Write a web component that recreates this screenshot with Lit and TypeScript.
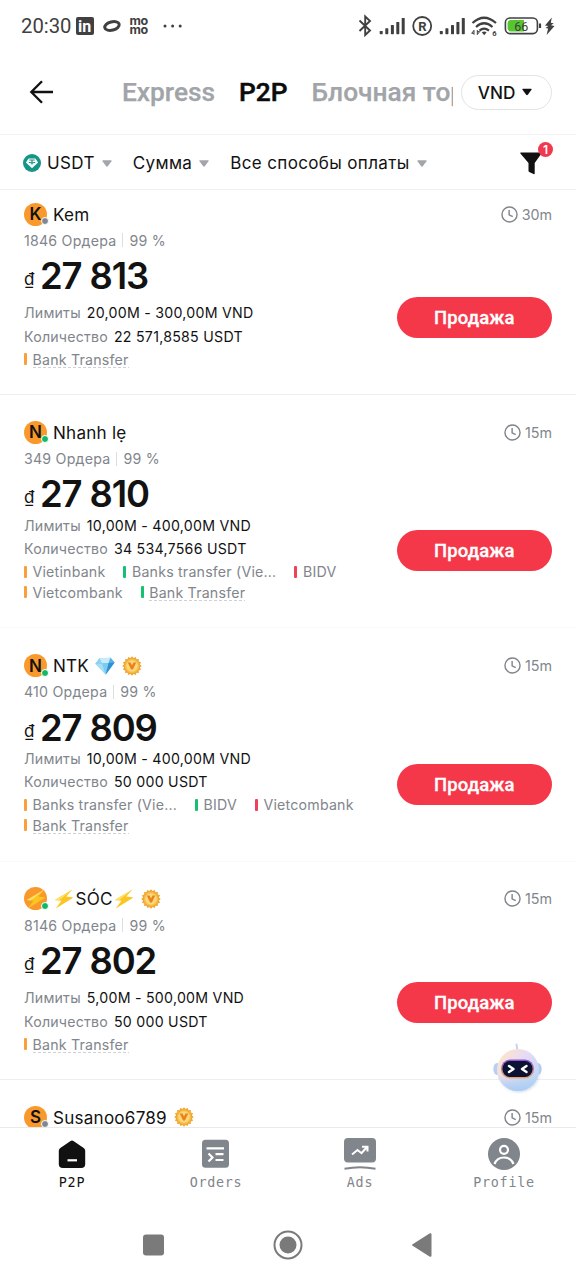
import { LitElement, html, svg, css, nothing } from 'lit';
import { customElement, property } from 'lit/decorators.js';
import { classMap } from 'lit/directives/class-map.js';

type Tone = 'orange' | 'green' | 'red';
interface Payment { name: string; tone: Tone; dashed?: boolean }
interface Offer {
  name: string;
  letter?: string;
  online: boolean;
  diamond?: boolean;
  bolts?: boolean;
  verified?: boolean;
  orders?: string;
  price?: string;
  limits?: string;
  amount?: string;
  time: string;
  rows: Payment[][];
}

const bank: Payment = { name: 'Bank Transfer', tone: 'orange', dashed: true };

const offers: Offer[] = [
  { name: 'Kem', letter: 'K', online: false, orders: '1846', price: '27 813', limits: '20,00M - 300,00M VND', amount: '22 571,8585 USDT', time: '30m', rows: [[bank]] },
  {
    name: 'Nhanh lẹ', letter: 'N', online: true, orders: '349', price: '27 810', limits: '10,00M - 400,00M VND', amount: '34 534,7566 USDT', time: '15m',
    rows: [
      [{ name: 'Vietinbank', tone: 'orange' }, { name: 'Banks transfer (Vie...', tone: 'green' }, { name: 'BIDV', tone: 'red' }],
      [{ name: 'Vietcombank', tone: 'orange' }, { ...bank, tone: 'green' }],
    ],
  },
  {
    name: 'NTK', letter: 'N', online: true, diamond: true, verified: true, orders: '410', price: '27 809', limits: '10,00M - 400,00M VND', amount: '50 000 USDT', time: '15m',
    rows: [
      [{ name: 'Banks transfer (Vie...', tone: 'orange' }, { name: 'BIDV', tone: 'green' }, { name: 'Vietcombank', tone: 'red' }],
      [bank],
    ],
  },
  { name: 'SÓC', online: true, bolts: true, verified: true, orders: '8146', price: '27 802', limits: '5,00M - 500,00M VND', amount: '50 000 USDT', time: '15m', rows: [[bank]] },
  { name: 'Susanoo6789', letter: 'S', online: false, verified: true, time: '15m', rows: [] },
];

const boltIcon = html`<svg class="ico" width="20" height="20" viewBox="0 0 20 20">
  <path d="M18.500.500.800 11l6.600.700L1.800 19.500 19.500 8.600l-7.300-1z" fill="#fcc521"/>
  <path d="M18.500.500.800 11l4 .400z" fill="#ffe06a"/>
</svg>`;

const diamondIcon = html`<svg class="ico" width="20" height="18" viewBox="0 0 20 18">
  <path d="M4.5 1.2 15.5.8 19.6 5.6 10.8 17.4.4 6.8z" fill="#5fb9ea"/>
  <path d="M4.5 1.2 7 6.4.4 6.8z" fill="#8fd2f3"/>
  <path d="M4.5 1.2 15.5.8 13.6 6.1 7 6.4z" fill="#c9ecfb"/>
  <path d="M15.5.8 19.6 5.6l-6 .5z" fill="#59b2e6"/>
  <path d="M7 6.4 13.6 6.1 10.8 17.4z" fill="#7ccbf2"/>
  <path d="M.4 6.8 7 6.4l3.8 11z" fill="#a6def7"/>
  <path d="M19.6 5.6l-6 .5-2.8 11.3z" fill="#2f8fd0"/>
</svg>`;

const spikes = Array.from({ length: 16 }, (_, i) => {
  const at = (r: number, k: number) => {
    const a = (Math.PI * 2 * k) / 32;
    return `${(10 + r * Math.sin(a)).toFixed(2)},${(10 - r * Math.cos(a)).toFixed(2)}`;
  };
  return `${at(9.8, i * 2)} ${at(8.1, i * 2 + 1)}`;
}).join(' ');

const badgeIcon = html`<svg class="ico" width="20" height="20" viewBox="0 0 20 20">
  <polygon points=${spikes} fill="#efa733"/>
  <circle cx="10" cy="10" r="7.2" fill="#f6bd4a"/>
  <circle cx="10" cy="10" r="5.8" fill="#fdd77a"/>
  <path d="M5.8 6.4h2.7L10 9.4l1.5-3h2.7L10.9 13.6H9.1z" fill="#e8821c"/>
</svg>`;

const clockIcon = html`<svg class="ico" width="17" height="17" viewBox="0 0 18 18" fill="none" stroke="#81858c" stroke-width="1.5">
  <circle cx="9" cy="9" r="8"/><path d="M8.6 4.2v5.200l3.800 1.900"/>
</svg>`;

const caret = (fill: string, w = 10, h = 7) => html`<svg class="ico" width=${w} height=${h} viewBox="0 0 10 7">
  <path d="M1 .3h8q1 .1.5 1L5.8 6.3q-.8.8-1.6 0L.5 1.3Q0 .4 1 .3z" fill=${fill}/>
</svg>`;

const signalBars = svg`<g fill="#404040" stroke="none">
  <rect x="0" y="13" width="3" height="3.2" rx=".6"/><rect x="5.6" y="10.2" width="3" height="6" rx=".6"/>
  <rect x="11.2" y="7" width="3" height="9.2" rx=".6"/><rect x="16.6" y="4" width="3" height="12.2" rx=".6"/>
  <rect x="22" y="0" width="3" height="16.2" rx=".6"/>
</g>`;

@customElement('offer-card')
class OfferCard extends LitElement {
  @property({ attribute: false }) offer!: Offer;

  static styles = css`
    :host { display: block; font-family: Inter, sans-serif; color: #121212; }
    .card { display: flex; justify-content: space-between; height: 218.3px; padding: 24.4px 24px 0; box-sizing: border-box; border-bottom: 1px solid #eeeeef; }
    .card.double { height: 233.3px; border-bottom-color: #fafafa; }
    .info { display: flex; flex-direction: column; align-items: flex-start; }
    .ico { display: block; flex: none; }
    .name { display: flex; align-items: center; height: 26px; font-size: 17.1px; letter-spacing: .22px; white-space: nowrap; }
    .text { margin-left: 6px; }
    .badge { margin-left: 7px; }
    .diamond { margin-left: 6px; }
    .bolted { display: flex; align-items: center; gap: 1.5px; margin-left: 7px; }
    .avatar { position: relative; display: flex; width: 23px; height: 23px; border-radius: 50%; background: #f9992b; align-items: center; justify-content: center; font-size: 17px; font-weight: 600; letter-spacing: 0; flex: none; }
    .dot { position: absolute; right: -1.5px; bottom: .5px; width: 6px; height: 6px; border: 1px solid #fff; border-radius: 50%; background: #7f8694; }
    .dot.on { background: #0fb866; }
    .orders { display: flex; align-items: center; height: 20px; margin-top: 3.4px; font-size: 14.2px; letter-spacing: .22px; color: #81858c; white-space: nowrap; }
    .sep { width: 1px; height: 14px; margin: 0 6px; background: #dcdde0; }
    .price { display: flex; align-items: flex-start; height: 44px; line-height: 44px; margin-top: 3.6px; white-space: nowrap; }
    .cur { width: 16px; font-size: 17px; line-height: 51px; }
    .num { font-size: 36.4px; font-weight: 600; letter-spacing: -1.1px; }
    .lines { display: flex; flex-direction: column; align-items: flex-start; margin-top: 3px; }
    .double .lines { margin-top: -3px; }
    .line { display: flex; height: 23.5px; align-items: center; gap: 6px; font-size: 14.2px; color: #81858c; white-space: nowrap; letter-spacing: .2px; }
    .line b { font-weight: 400; color: #121212; letter-spacing: .25px; }
    .pays { display: flex; gap: 18px; height: 20.5px; align-items: center; margin-top: 1px; white-space: nowrap; }
    .pays + .pays { margin-top: 0; }
    .pay { display: flex; align-items: center; gap: 5.5px; font-size: 14.2px; letter-spacing: .2px; line-height: 17px; color: #81858c; }
    .pay i { width: 3px; height: 12px; border-radius: 1px; }
    .orange i { background: #f9a03a; } .green i { background: #17bf70; } .red i { background: #f0405a; }
    .dashed span { background: repeating-linear-gradient(90deg, #cfd1d4 0 3px, transparent 3px 5px) left bottom / 100% 1px no-repeat; }
    .side { display: flex; flex-direction: column; justify-content: space-between; align-items: flex-end; padding-bottom: 55.5px; }
    .double .side { padding-bottom: 56px; }
    .time { display: flex; align-items: center; height: 26px; gap: 3.5px; font-size: 14.3px; letter-spacing: 0; color: #81858c; }
    .sell { display: block; width: 155.5px; height: 41px; padding: 0; border: 0; border-radius: 21px; background: #f53849; color: #fff; font: 500 18.5px/42px Roboto, sans-serif; text-align: center; letter-spacing: .1px; -webkit-text-stroke: .3px #fff; }
  `;

  render() {
    const o = this.offer;
    return html`<article class=${classMap({ card: true, double: o.rows.length > 1 })}>
      <div class="info">
        <div class="name">
          <span class="avatar">${o.letter ?? boltIcon}<span class=${classMap({ dot: true, on: o.online })}></span></span>
          ${o.bolts
            ? html`<span class="bolted">${boltIcon}<span>${o.name}</span>${boltIcon}</span>`
            : html`<span class="text">${o.name}</span>`}
          ${o.diamond ? html`<span class="diamond">${diamondIcon}</span>` : nothing}
          ${o.verified ? html`<span class="badge">${badgeIcon}</span>` : nothing}
        </div>
        ${o.price
          ? html`<div class="orders"><span>${o.orders} Ордера</span><span class="sep"></span><span>99 %</span></div>
            <div class="price"><span class="cur">₫</span><span class="num">${o.price}</span></div>
            <div class="lines">
              <div class="line"><span>Лимиты</span><b>${o.limits}</b></div>
              <div class="line"><span>Количество</span><b>${o.amount}</b></div>
              ${o.rows.map((row) => html`<div class="pays">${row.map((p) => html`<div class=${classMap({ pay: true, [p.tone]: true, dashed: !!p.dashed })}><i></i><span>${p.name}</span></div>`)}</div>`)}
            </div>`
          : nothing}
      </div>
      <div class="side">
        <div class="time">${clockIcon}<span>${o.time}</span></div>
        ${o.price ? html`<button class="sell">Продажа</button>` : nothing}
      </div>
    </article>`;
  }
}

@customElement('app-root')
class AppRoot extends LitElement {
  static styles = css`
    :host { display: flex; flex-direction: column; position: relative; width: 576px; height: 1280px; overflow: hidden; background: #fff; font-family: Inter, sans-serif; color: #121212; }
    .ico { display: block; flex: none; }
    .status { display: flex; align-items: center; height: 52px; padding: 0 21px; box-sizing: border-box; flex: none; font-family: Roboto, sans-serif; color: #404040; }
    .clock { font-size: 20.3px; margin-right: 4px; line-height: 52px; }
    .linkedin { width: 18px; height: 18px; border-radius: 2px; background: #404040; color: #fff; font: 700 16px/19px Roboto, sans-serif; text-align: center; }
    .ring { margin-left: 8px; }
    .momo { display: flex; flex-direction: column; margin-left: 8px; width: 19px; font: 700 12.5px/9px Inter, sans-serif; letter-spacing: -.5px; padding-bottom: 2px; }
    .dots { margin-left: 14px; }
    .grow { flex: 1; }
    .header { display: flex; align-items: center; height: 83px; padding: 0 24px 1.5px 28px; box-sizing: border-box; flex: none; border-bottom: 1.5px solid #f2f2f2; }
    .tabs { display: flex; width: 331px; margin-left: 68px; gap: 24px; overflow: hidden; white-space: nowrap; font: 500 26.3px/36px Roboto, sans-serif; color: #a1a4a8; }
    .tab { -webkit-text-stroke: .25px currentColor; }
    .tab.active { color: #0b0b0b; -webkit-text-stroke-width: .5px; }
    .vnd { display: flex; width: 91px; height: 35px; margin-left: auto; box-sizing: border-box; border: 1.3px solid #e2e3e4; border-radius: 18px; align-items: center; justify-content: center; gap: 7px; padding-right: 3px; font-size: 17.2px; font-weight: 500; flex: none; }
    .filters { display: flex; align-items: center; height: 55px; padding: 2px 24px 0 23px; box-sizing: border-box; border-bottom: 1.5px solid #f0f0f1; flex: none; font-size: 17px; letter-spacing: .36px; white-space: nowrap; }
    .filter { display: flex; align-items: center; gap: 7px; margin-right: 21px; }
    .usdt { margin-right: 6px; }
    .funnel { position: relative; margin-left: auto; margin-right: 10px; }
    .count { position: absolute; left: 18px; top: -10px; width: 15px; height: 15px; border-radius: 50%; background: #f0394f; color: #fff; font: 600 12px/15px Inter, sans-serif; text-align: center; letter-spacing: 0; }
    .list { flex: 1; min-height: 0; overflow: hidden; }
    .scroll { margin-top: -13.4px; }
    .nav { display: grid; grid-template-columns: repeat(4, 1fr); height: 82px; flex: none; border-top: 1.3px solid #e9eaeb; background: #fff; }
    .item { display: flex; flex-direction: column; align-items: center; padding-top: 10px; font: 13.4px/16px "DejaVu Sans Mono", monospace; letter-spacing: .72px; color: #81858c; }
    .item svg { margin-bottom: 5px; }
    .item.active { color: #121212; }
    .system { display: flex; justify-content: center; align-items: center; height: 70px; gap: 108px; flex: none; }
    .robot { position: absolute; left: 492px; top: 1041px; }
  `;

  render() {
    return html`
      <div class="status">
        <span class="clock">20:30</span>
        <span class="linkedin">in</span>
        <svg class="ico ring" width="20" height="14" viewBox="0 0 20 14"><ellipse cx="10" cy="7" rx="7.4" ry="4.1" transform="rotate(-14 10 7)" fill="none" stroke="#404040" stroke-width="3"/></svg>
        <span class="momo"><span>mo</span><span>mo</span></span>
        <svg class="ico dots" width="20" height="4" viewBox="0 0 20 4" fill="#404040"><circle cx="2" cy="2" r="1.5"/><circle cx="9.6" cy="2" r="1.5"/><circle cx="17.2" cy="2" r="1.5"/></svg>
        <span class="grow"></span>
        <svg class="ico" width="198" height="24" viewBox="0 0 198 24" fill="none" stroke="#404040">
          <path d="M2.500 6.500 13 16.500 8.200 21V2.500L13 7 2.500 17" stroke-width="1.900"/>
          <circle cx="65.2" cy="12" r="9" stroke-width="1.8"/>
          <g transform="translate(22.7 4)">${signalBars}</g>
          <g transform="translate(82.8 4)">${signalBars}</g>
          <g stroke-width="2.2"><path d="M115.500 9Q127 -1.500 139 9"/><path d="M119 13Q127 5.500 135.500 13"/><path d="M122.500 16.600Q127 12.500 132 16.600"/></g>
          <path d="M124.800 18.300q2.400-1.800 4.800 0l-2.400 3z" fill="#404040" stroke="none"/>
          <path d="M117 20.700v-4.400l-2.300 3h2.300M120.300 16v4.600l2.300-3h-2.300" stroke-width="1"/>
          <rect x="148.400" y="4" width="32" height="15.600" rx="4.500" stroke-width="1.600"/>
          <path d="M154 6h13v11.600h-13q-3.400 0-3.400-3.300V9.300q0-3.300 3.400-3.300z" fill="#55c62e" stroke="none"/>
          <path d="M183 9.500v4.500" stroke-width="2.200"/>
          <path d="M194.800 3.500 188 11.500l3.400.600-2.900 2 2.600.500-1.500 6.400 7.900-9-3.500-.700 2.700-2-2.900-.500z" fill="#404040" stroke="none"/>
          <g fill="#404040" stroke="none" font-family="Roboto, sans-serif">
            <text x="65.400" y="16.700" font-size="13" font-weight="700" text-anchor="middle">R</text>
            <text x="137.300" y="21.500" font-size="7.500" font-weight="700" text-anchor="middle">6</text>
            <text x="164.300" y="16.500" font-size="12.500" text-anchor="middle">66</text>
          </g>
        </svg>
      </div>

      <header class="header">
        <svg class="ico" width="26" height="26" viewBox="0 0 26 26" fill="none" stroke="#111" stroke-width="2.3"><path d="M25 13H3.500M14 2.300 3.300 13 14 23.700"/></svg>
        <div class="tabs"><span class="tab">Express</span><span class="tab active">P2P</span><span class="tab">Блочная торговля</span></div>
        <div class="vnd">VND ${caret('#111', 10, 8)}</div>
      </header>

      <div class="filters">
        <svg class="ico usdt" width="18" height="18" viewBox="0 0 18 18"><circle cx="9" cy="9" r="9" fill="#159588"/><path d="M5.600 4.500h6.800l2.700 4L9 14.300 2.900 8.500z" fill="#fff"/><path d="M6.300 6h5.400M9 6v4.500M5.800 8.200q3.200 1.300 6.400 0" stroke="#159588" stroke-width="1.200" fill="none"/></svg>
        <span class="filter">USDT ${caret('#a2a5aa')}</span>
        <span class="filter">Сумма ${caret('#a2a5aa')}</span>
        <span class="filter">Все способы оплаты ${caret('#a2a5aa')}</span>
        <span class="funnel">
          <svg class="ico" width="22" height="23" viewBox="0 0 22 23"><path d="M.8.500h20.400q1 .200.300 1.100L14.700 11v10.500q-.200 1.100-1.200.600l-4.300-2.200q-.700-.400-.700-1.200V11L.4 1.600Q0 .700.8.500z" fill="#111"/></svg>
          <span class="count">1</span>
        </span>
      </div>

      <main class="list"><div class="scroll">${offers.map((o) => html`<offer-card .offer=${o}></offer-card>`)}</div></main>

      <nav class="nav">
        <div class="item active">
          <svg class="ico" width="32" height="32" viewBox="0 0 32 32"><path d="M14.200 3.200q1.800-1.300 3.600 0l9.900 6.900q1.500 1.100 1.500 2.700v13.200q0 4-4 4H6.800q-4 0-4-4V12.800q0-1.600 1.500-2.700z" fill="#111"/><path d="M11.500 22.300h9.500" stroke="#fff" stroke-width="2.200"/></svg>
          <span>P2P</span>
        </div>
        <div class="item">
          <svg class="ico" width="32" height="32" viewBox="0 0 32 32"><rect x="2" y="1.700" width="27" height="28" rx="3.500" fill="#81858c"/><path d="M6.500 10.300h17.500M15.500 16.200h8M15.500 22h8M8.500 15.500l4 4-4 4" stroke="#fff" stroke-width="2.200" fill="none"/></svg>
          <span>Orders</span>
        </div>
        <div class="item">
          <svg class="ico" width="32" height="32" viewBox="0 0 32 32"><rect x="0" y="0" width="32" height="24.500" rx="4" fill="#81858c"/><path d="M.5 30.800Q16 27.600 31.500 30.800" stroke="#81858c" stroke-width="2" fill="none"/><path d="M8 16.500 13.500 12l4 3.200L23 9M18 8.700h5.500v4.800" stroke="#fff" stroke-width="2" fill="none"/></svg>
          <span>Ads</span>
        </div>
        <div class="item">
          <svg class="ico" width="32" height="32" viewBox="0 0 32 32"><circle cx="16" cy="16" r="16" fill="#81858c"/><circle cx="16" cy="11.800" r="4" stroke="#fff" stroke-width="2.200" fill="none"/><path d="M6.500 26Q9 19.500 16 19.500T25.500 26" stroke="#fff" stroke-width="2.200" fill="none"/></svg>
          <span>Profile</span>
        </div>
      </nav>

      <div class="system">
        <svg class="ico" width="22" height="22" viewBox="0 0 22 22"><rect x="0" y=".5" width="21" height="21" rx="3" fill="#7a7a7a"/></svg>
        <svg class="ico" width="30" height="30" viewBox="0 0 30 30"><circle cx="15" cy="15" r="13.500" fill="none" stroke="#7a7a7a" stroke-width="2"/><circle cx="15" cy="15" r="8.500" fill="#7a7a7a"/></svg>
        <svg class="ico" width="22" height="26" viewBox="0 0 22 26"><path d="M18.500 1.500q2-1 2 1v21q0 2-2 1L2 14q-2-1 0-2z" fill="#7a7a7a"/></svg>
      </div>

      <svg class="ico robot" width="52" height="54" viewBox="0 0 52 54">
        <defs>
          <linearGradient id="skin" x1=".1" y1=".2" x2=".9" y2=".8"><stop offset="0" stop-color="#fbe3cf"/><stop offset=".45" stop-color="#e6dbf6"/><stop offset="1" stop-color="#b9d8f6"/></linearGradient>
          <linearGradient id="shade" x1="0" y1="0" x2="0" y2="1"><stop offset=".6" stop-color="#a9cdf2" stop-opacity="0"/><stop offset="1" stop-color="#a9cdf2"/></linearGradient>
          <linearGradient id="rim" x1="0" y1="0" x2="0" y2="1"><stop offset="0" stop-color="#8a52d8"/><stop offset="1" stop-color="#f0a860"/></linearGradient>
          <filter id="soft" x="-30%" y="-30%" width="160%" height="160%"><feGaussianBlur stdDeviation="1.5"/></filter>
        </defs>
        <ellipse cx="27" cy="32" rx="20" ry="19" fill="#6c93bd" opacity=".35" filter="url(#soft)"/>
        <path d="M25.500 10 24.500 3.500" stroke="#c9d4ea" stroke-width="2" stroke-linecap="round"/>
        <ellipse cx="5" cy="28" rx="3.700" ry="6" fill="#b5d0f2"/><ellipse cx="46" cy="28" rx="3.700" ry="6" fill="#b5c8f2"/>
        <circle cx="26" cy="29" r="21" fill="url(#skin)"/><circle cx="26" cy="29" r="21" fill="url(#shade)"/>
        <rect x="9" y="18.500" width="33" height="19" rx="9" fill="url(#rim)"/>
        <rect x="10.500" y="20" width="30" height="16" rx="7.500" fill="#0b1233"/>
        <path d="M17 25 21.500 28 17 31M34.500 25 30 28 34.500 31" stroke="#fff" stroke-width="2.400" fill="none" stroke-linecap="round" stroke-linejoin="round"/>
      </svg>
    `;
  }
}
